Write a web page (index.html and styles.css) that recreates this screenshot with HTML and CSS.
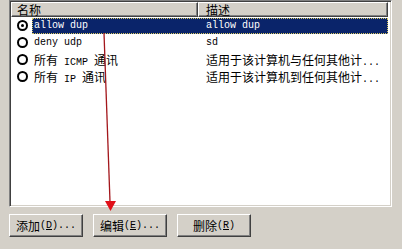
FILE: index.html
```html
<!DOCTYPE html>
<html>
<head>
    <title>筛选器操作</title>
    <meta charset="UTF-8">
    <link rel="stylesheet" href="styles.css">
</head>
<body>
    <div class="panel">
        <div class="listbox">
            <div class="header">
                <div class="col col-name"><span class="cn">名称</span></div>
                <div class="col col-desc"><span class="cn">描述</span></div>
            </div>

            <div class="row selected">
                <span class="radio on"></span>
                <div class="cells">
                    <span class="cell cell-name">allow dup</span>
                    <span class="cell cell-desc">allow dup</span>
                </div>
            </div>
            <div class="row">
                <span class="radio"></span>
                <div class="cells">
                    <span class="cell cell-name">deny udp</span>
                    <span class="cell cell-desc">sd</span>
                </div>
            </div>
            <div class="row">
                <span class="radio"></span>
                <div class="cells">
                    <span class="cell cell-name"><span class="cn">所有</span> ICMP <span class="cn">通讯</span></span>
                    <span class="cell cell-desc"><span class="cn">适用于该计算机与任何其他计</span>...</span>
                </div>
            </div>
            <div class="row">
                <span class="radio"></span>
                <div class="cells">
                    <span class="cell cell-name"><span class="cn">所有</span> IP <span class="cn">通讯</span></span>
                    <span class="cell cell-desc"><span class="cn">适用于该计算机到任何其他计</span>...</span>
                </div>
            </div>
        </div>

        <div class="buttons">
            <button class="btn"><span class="cn">添加</span>(<u>D</u>)...</button>
            <button class="btn"><span class="cn">编辑</span>(<u>E</u>)...</button>
            <button class="btn"><span class="cn">删除</span>(<u>R</u>)</button>
        </div>

        <!-- red annotation arrow drawn over the dialog -->
        <svg class="arrow" width="402" height="249" viewBox="0 0 402 249">
            <line x1="104" y1="33" x2="110" y2="202" stroke="#a3161b" stroke-width="1.3"/>
            <polygon points="105,201 116,201 110.5,211" fill="#e0101a"/>
        </svg>
    </div>
</body>
</html>
```

FILE: styles.css
```css
:root {
    --face: #d4d0c8;
    --shadow: #808080;
    --dark: #404040;
    --light: #ffffff;
    --select: #0a246a;
    --text: #000000;
}

body {
    margin: 0;
    padding: 0;
    width: 402px;
    height: 249px;
    overflow: hidden;
    background-color: var(--face);
    font-family: "Liberation Mono", "Noto Sans CJK SC", monospace;
    font-size: 10px;
    color: var(--text);
}

.cn {
    font-family: "Noto Sans CJK SC", sans-serif;
    font-size: 12px;
}

.panel {
    position: relative;
    width: 402px;
    height: 249px;
    padding-left: 9px;
    box-sizing: border-box;
}

/* sunken list view */
.listbox {
    width: 383px;
    height: 207px;
    box-sizing: border-box;
    background-color: #ffffff;
    border: 1px solid;
    border-color: var(--shadow) var(--light) var(--light) var(--shadow);
    box-shadow: inset 1px 1px 0 var(--dark), inset -1px -1px 0 var(--face);
    padding: 1px 3px 1px 1px;
}

.header {
    display: flex;
    height: 15px;
}

.col {
    display: flex;
    align-items: center;
    box-sizing: border-box;
    height: 15px;
    background-color: var(--face);
    border-top: 1px solid var(--light);
    border-left: 1px solid var(--light);
    border-bottom: 1px solid var(--dark);
    border-right: 1px solid var(--dark);
    box-shadow: inset -1px -1px 0 var(--shadow);
    padding-left: 5px;
    line-height: 1;
}

.col-name {
    width: 187px;
}

.col-desc {
    flex: 1;
    padding-left: 7px;
}

.row {
    display: flex;
    align-items: center;
    height: 17px;
}

.radio {
    width: 7px;
    height: 7px;
    margin: 0 4px 0 6px;
    border: 2px solid #000000;
    border-radius: 50%;
    flex-shrink: 0;
    position: relative;
}

.radio.on::after {
    content: "";
    position: absolute;
    left: 2px;
    top: 2px;
    width: 3px;
    height: 3px;
    border-radius: 50%;
    background-color: #000000;
}

.cells {
    display: flex;
    flex: 1;
    height: 16px;
    align-items: center;
    box-sizing: border-box;
    border: 1px dotted transparent;
}

.row.selected .cells {
    background-color: var(--select);
    color: #ffffff;
    border-color: #d8c860;
}

.cell {
    white-space: nowrap;
    overflow: hidden;
}

.cell-name {
    width: 165px;
    padding-left: 1px;
    box-sizing: border-box;
}

.cell-desc {
    flex: 1;
    padding-left: 8px;
}

.buttons {
    display: flex;
    gap: 10px;
    margin-top: 7px;
}

.btn {
    width: 74px;
    height: 23px;
    padding: 0;
    background-color: var(--face);
    border: 1px solid;
    border-color: var(--light) var(--dark) var(--dark) var(--light);
    box-shadow: inset -1px -1px 0 var(--shadow);
    font-family: "Liberation Mono", "Noto Sans CJK SC", monospace;
    font-size: 10px;
    color: var(--text);
    display: flex;
    align-items: center;
    justify-content: center;
}

.arrow {
    position: absolute;
    left: 0;
    top: 0;
    pointer-events: none;
}
```
